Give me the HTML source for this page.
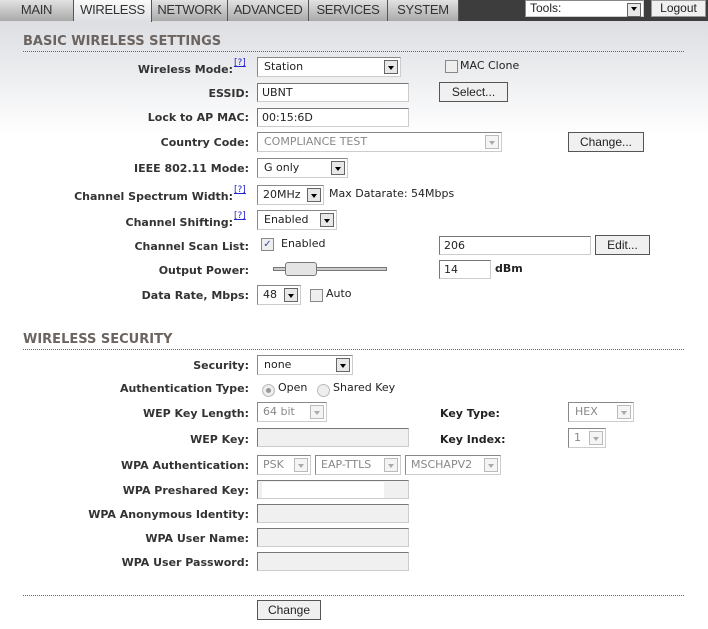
<!DOCTYPE html>
<html><head><meta charset="utf-8"><style>
*{box-sizing:border-box;margin:0;padding:0}
body{width:708px;height:629px;position:relative;overflow:hidden;font-family:"DejaVu Sans",Verdana,sans-serif;font-size:11px;color:#222;background:linear-gradient(#dcdee2 21px,#fff 135px)}
.a{position:absolute}
.top{left:0;top:0;width:708px;height:21px;background:#3d3d3d}
.tab{position:absolute;top:0;height:21px;background:linear-gradient(#e2e2e2,#a9a9a9);border-right:1px solid #555;font-family:"Liberation Sans",sans-serif;font-size:13px;color:#333;text-align:center;line-height:19px;letter-spacing:-0.3px}
.tab.on{background:linear-gradient(#fafafa,#dcdee2);height:22px}
.h{font-size:13px;font-weight:bold;color:#6b6460;left:23px}
.line{left:23px;width:661px;border-top:1px dotted #666}
.l{right:459px;font-weight:bold;color:#333;white-space:nowrap}
.q{color:#22c;font-size:9px;text-decoration:underline;vertical-align:top;font-weight:normal}
.i{background:#fff;border:1px solid;border-color:#777 #ccc #ccc #777;height:19px;padding-left:4px;line-height:17px;font-size:11px}
.d{background:#f0f0f0;color:#888}
.s{background:#fff;border:1px solid;border-color:#888 #ccc #ccc #888;height:20px;padding-left:6px;line-height:18px}
.s:after{content:"";position:absolute;right:2px;top:2px;width:14px;height:14px;background:#e8e8e8;border:1px solid #666;box-sizing:border-box}
.s b{position:absolute;right:6px;top:8px;border:3px solid transparent;border-top:4px solid #000;z-index:2}
.s.d:after{border-color:#bbb;background:#f4f4f4}
.s.d b{border-top-color:#aaa}
.btn{background:#f0f0f0;border:1px solid #555;height:20px;text-align:center;line-height:18px;font-family:"Liberation Sans",sans-serif;font-size:12px}
.cb{width:13px;height:13px;border:1px solid #888;background:#eee}
.r{width:13px;height:13px;border-radius:50%;border:1px solid #bbb;background:#eee}
</style></head><body>
<div class="a top"></div>
<div class="tab" style="left:0;width:74px">MAIN</div>
<div class="tab on" style="left:74px;width:78px">WIRELESS</div>
<div class="tab" style="left:152px;width:76px">NETWORK</div>
<div class="tab" style="left:228px;width:81px">ADVANCED</div>
<div class="tab" style="left:309px;width:79px">SERVICES</div>
<div class="tab" style="left:388px;width:71px">SYSTEM</div>
<div class="a s" style="left:525px;top:0;width:119px;height:17px;line-height:14px;padding-left:4px;font-family:'Liberation Sans';font-size:12px">Tools:<b style="top:6px"></b></div>
<div class="a btn" style="left:651px;top:0;width:55px;height:17px;line-height:14px;border-color:#999">Logout</div>

<div class="a h" style="top:34px">BASIC WIRELESS SETTINGS</div>
<div class="a line" style="top:51px"></div>

<div class="a l" style="top:63px;right:475px">Wireless Mode:</div><div class="a q" style="left:234px;top:58px">[?]</div>
<div class="a s" style="left:257px;top:57px;width:144px">Station<b></b></div>
<div class="a cb" style="left:445px;top:60px"></div><div class="a" style="left:460px;top:59px">MAC Clone</div>

<div class="a l" style="top:87px">ESSID:</div>
<div class="a i" style="left:257px;top:83px;width:152px">UBNT</div>
<div class="a btn" style="left:439px;top:82px;width:69px">Select...</div>

<div class="a l" style="top:111px">Lock to AP MAC:</div>
<div class="a i" style="left:257px;top:108px;width:152px">00:15:6D</div>

<div class="a l" style="top:136px">Country Code:</div>
<div class="a s d" style="left:257px;top:132px;width:245px">COMPLIANCE TEST<b></b></div>
<div class="a btn" style="left:568px;top:132px;width:76px">Change...</div>

<div class="a l" style="top:162px">IEEE 802.11 Mode:</div>
<div class="a s" style="left:257px;top:158px;width:91px">G only<b></b></div>

<div class="a l" style="top:190px;right:475px">Channel Spectrum Width:</div><div class="a q" style="left:234px;top:185px">[?]</div>
<div class="a s" style="left:257px;top:185px;width:67px;padding-left:5px">20MHz<b></b></div>
<div class="a" style="left:329px;top:187px">Max Datarate: 54Mbps</div>

<div class="a l" style="top:216px;right:475px">Channel Shifting:</div><div class="a q" style="left:234px;top:211px">[?]</div>
<div class="a s" style="left:257px;top:210px;width:80px">Enabled<b></b></div>

<div class="a l" style="top:240px">Channel Scan List:</div>
<div class="a cb" style="left:261px;top:238px;color:#34a;font-size:10px;line-height:11px;text-align:center">✓</div>
<div class="a" style="left:281px;top:237px">Enabled</div>
<div class="a i" style="left:439px;top:236px;width:152px">206</div>
<div class="a btn" style="left:595px;top:235px;width:55px">Edit...</div>

<div class="a l" style="top:264px">Output Power:</div>
<div class="a" style="left:273px;top:267px;width:114px;height:4px;background:#ccc;border:1px solid #777"></div>
<div class="a" style="left:285px;top:262px;width:32px;height:14px;background:#e4e4e4;border:1px solid #777;border-radius:3px"></div>
<div class="a i" style="left:439px;top:260px;width:52px">14</div>
<div class="a" style="left:495px;top:262px;font-weight:bold">dBm</div>

<div class="a l" style="top:289px">Data Rate, Mbps:</div>
<div class="a s" style="left:257px;top:285px;width:44px;padding-left:5px">48<b></b></div>
<div class="a cb" style="left:310px;top:289px"></div><div class="a" style="left:326px;top:287px">Auto</div>

<div class="a h" style="top:332px">WIRELESS SECURITY</div>
<div class="a line" style="top:349px"></div>

<div class="a l" style="top:359px">Security:</div>
<div class="a s" style="left:257px;top:355px;width:96px">none<b></b></div>

<div class="a l" style="top:382px">Authentication Type:</div>
<div class="a r" style="left:262px;top:384px;box-shadow:inset 0 0 0 3px #eee,inset 0 0 0 6px #999"></div><div class="a" style="left:278px;top:381px">Open</div>
<div class="a r" style="left:317px;top:384px"></div><div class="a" style="left:333px;top:381px">Shared Key</div>

<div class="a l" style="top:407px">WEP Key Length:</div>
<div class="a s d" style="left:257px;top:402px;width:70px;padding-left:5px">64 bit<b></b></div>
<div class="a" style="left:440px;top:407px;font-weight:bold">Key Type:</div>
<div class="a s d" style="left:568px;top:402px;width:66px">HEX<b></b></div>

<div class="a l" style="top:433px">WEP Key:</div>
<div class="a i d" style="left:257px;top:428px;width:152px"></div>
<div class="a" style="left:440px;top:433px;font-weight:bold">Key Index:</div>
<div class="a s d" style="left:568px;top:428px;width:38px;padding-left:5px">1<b></b></div>

<div class="a l" style="top:459px">WPA Authentication:</div>
<div class="a s d" style="left:257px;top:455px;width:54px;padding-left:5px">PSK<b></b></div>
<div class="a s d" style="left:315px;top:455px;width:86px;padding-left:5px">EAP-TTLS<b></b></div>
<div class="a s d" style="left:405px;top:455px;width:96px;padding-left:5px">MSCHAPV2<b></b></div>

<div class="a l" style="top:484px">WPA Preshared Key:</div>
<div class="a i d" style="left:257px;top:480px;width:152px"></div>
<div class="a" style="left:262px;top:482px;width:122px;height:16px;background:#fff"></div>
<div class="a l" style="top:508px">WPA Anonymous Identity:</div>
<div class="a i d" style="left:257px;top:504px;width:152px"></div>
<div class="a l" style="top:532px">WPA User Name:</div>
<div class="a i d" style="left:257px;top:528px;width:152px"></div>
<div class="a l" style="top:556px">WPA User Password:</div>
<div class="a i d" style="left:257px;top:552px;width:152px"></div>

<div class="a line" style="top:595px"></div>
<div class="a btn" style="left:257px;top:600px;width:64px">Change</div>
</body></html>
